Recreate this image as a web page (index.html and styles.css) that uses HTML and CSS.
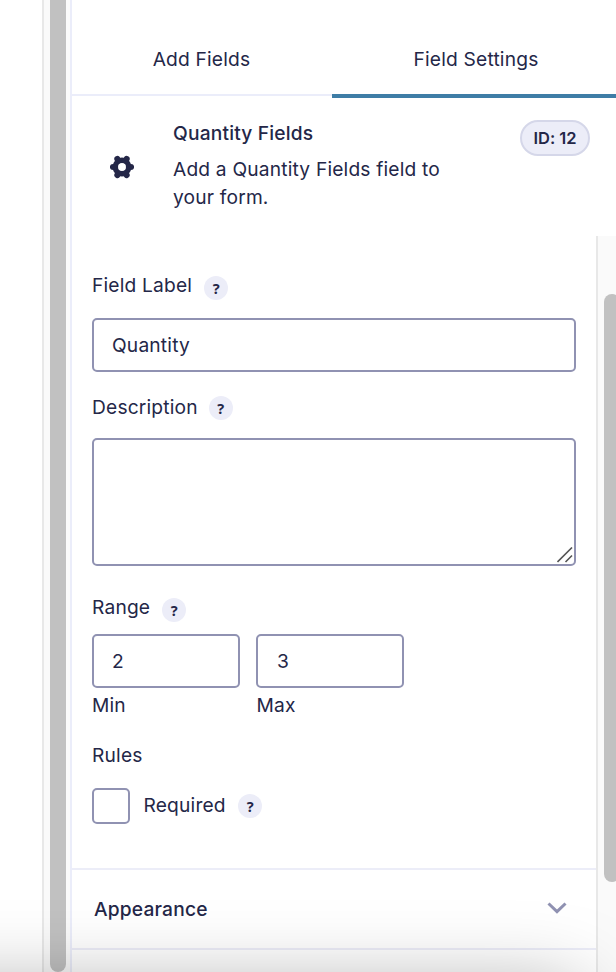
FILE: index.html
```html
<!DOCTYPE html>
<html lang="en">
<head>
<meta charset="utf-8">
<title>Field Settings</title>
<link rel="stylesheet" href="styles.css">
</head>
<body>
<div class="app">
  <div class="canvas"></div>
  <div class="track track-main"><div class="thumb"></div></div>
  <aside class="sidebar">
    <nav class="tabs">
      <a class="tab">Add Fields</a>
      <a class="tab active">Field Settings</a>
    </nav>
    <header class="summary">
      <svg class="gear" viewBox="0 0 24 24" width="24" height="24">
        <g fill="none" stroke="#242748">
          <circle cx="12" cy="12" r="6.700" stroke-width="5.400"/>
          <path d="M3 12H5M19 12h2M7.400 4L8.300 5.600M15.700 18.400l.9 1.600M16.600 4L15.700 5.600M8.300 18.400l-.9 1.600" stroke-width="6.200" stroke-linecap="round"/>
        </g>
      </svg>
      <div class="about">
        <h2>Quantity Fields</h2>
        <p>Add a Quantity Fields field to your form.</p>
      </div>
      <span class="badge">ID: 12</span>
    </header>
    <div class="scroller">
      <div class="content">
        <div class="fields">
          <div class="label"><span>Field Label</span><span class="help">?</span></div>
          <div class="input">Quantity</div>
          <div class="label label-desc"><span>Description</span><span class="help">?</span></div>
          <div class="input area">
            <svg width="16" height="16" viewBox="0 0 16 16"><path d="M.5 15L15 .5M8.500 15L15 8.500" stroke="#555" stroke-width="1.600" fill="none"/></svg>
          </div>
          <div class="label label-range"><span>Range</span><span class="help">?</span></div>
          <div class="range">
            <div><div class="input">2</div><span class="sub">Min</span></div>
            <div><div class="input">3</div><span class="sub">Max</span></div>
          </div>
          <div class="rules">Rules</div>
          <div class="check"><span class="box"></span><span>Required</span><span class="help">?</span></div>
        </div>
        <div class="section">
          <span>Appearance</span>
          <svg width="20" height="12" viewBox="0 0 20 12"><path d="M1.500 1.500L10 9.700L18.500 1.500" stroke="#9092b2" stroke-width="3" fill="none"/></svg>
        </div>
        <div class="section next"></div>
      </div>
      <div class="track track-side"><div class="thumb"></div></div>
    </div>
  </aside>
  <div class="shade"></div>
</div>
</body>
</html>
```
FILE: styles.css
```css
* { box-sizing: border-box; }
body {
  margin: 0;
  background: #fff;
  color: #242748;
  font: 400 19.2px/28px Inter, "Liberation Sans", sans-serif;
  font-feature-settings: "calt" 0;
  letter-spacing: .18px;
}
.app {
  position: relative;
  display: grid;
  grid-template-columns: 42px 28px 546px;
  width: 616px;
  height: 972px;
  overflow: hidden;
}
.track { background: #fafafa; border-left: 2px solid #e8e8e8; }
.thumb { background: #c1c1c1; }
.track-main { padding-left: 6px; }
.track-main .thumb { width: 16px; height: 972px; border-radius: 0 0 8px 8px; }
.sidebar {
  display: flex;
  flex-direction: column;
  height: 972px;
  border-left: 2px solid #ebedfa;
}
.tabs { display: flex; height: 98px; }
.tab {
  width: 260px;
  height: 96px;
  padding-top: 45px;
  padding-right: 1px;
  text-align: center;
  border-bottom: 2px solid #ebedfa;
}
.tab.active { width: 284px; height: 98px; padding-right: 0; padding-left: 4px; border-bottom: 4px solid #3e7da6; }
.summary {
  display: flex;
  height: 138px;
  padding: 21px 26px 0 38px;
}
.gear { margin-top: 36px; flex: none; }
.about { width: 280px; margin-left: 39px; }
.about h2 { margin: 0 0 8px; font-size: 19.2px; font-weight: 500; line-height: 28px; }
.about p { margin: 0; }
.badge {
  width: 70px;
  height: 36px;
  margin: 1px 0 0 auto;
  border: 2px solid #d5d7e9;
  border-radius: 18px;
  background: #ecedf8;
  font-size: 16.5px;
  font-weight: 600;
  letter-spacing: 0;
  line-height: 32px;
  text-align: center;
}
.scroller { display: flex; height: 736px; }
.content { width: 524px; overflow: hidden; }
.fields { height: 632px; padding: 35px 20px 0; }
.label { display: flex; gap: 12px; height: 28px; margin-bottom: 19px; }
.help {
  width: 24px;
  height: 24px;
  margin-top: 5px;
  border-radius: 50%;
  background: #ecedf8;
  font-family: "Noto Sans", sans-serif;
  font-size: 14.5px;
  font-weight: 700;
  letter-spacing: 0;
  line-height: 25px;
  text-align: center;
}
.input {
  height: 54px;
  padding: 11px 18px;
  border: 2px solid #9092b2;
  border-radius: 5px;
  background: #fff;
}
.label-desc { gap: 11px; margin-top: 21px; margin-bottom: 17px; }
.label-desc .help { margin-top: 3px; }
.area { display: flex; align-items: flex-end; justify-content: flex-end; height: 128px; padding: 0 1px 1px; }
.label-range { margin-top: 27px; margin-bottom: 13px; }
.range { display: grid; grid-template-columns: 148px 148px; gap: 16px; }
.range > :last-child .input { padding-left: 19px; }
.sub { display: block; margin-top: 3px; }
.range > :last-child .sub { padding-left: .5px; }
.rules { margin-top: 22px; }
.check { display: flex; height: 36px; margin-top: 19px; }
.box { width: 38px; height: 36px; margin-right: 13.5px; border: 2px solid #9092b2; border-radius: 5px; }
.check > span:nth-child(2) { padding-top: 3px; }
.check .help { margin: 6px 0 0 12.500px; }
.section {
  display: flex;
  justify-content: space-between;
  height: 80px;
  padding: 25px 29.500px 0 22px;
  border-top: 2px solid #ecedf8;
  font-weight: 500;
}
.section svg { margin-top: 7px; }
.next { height: 24px; }
.track-side { width: 20px; padding: 58px 0 0 6px; overflow: hidden; }
.track-side .thumb { width: 16px; height: 588px; border-radius: 8px; }
.shade {
  position: absolute;
  top: 988px;
  left: -100px;
  width: 680px;
  height: 200px;
  box-shadow: 0 0 80px rgba(0, 0, 0, .34);
}
```
